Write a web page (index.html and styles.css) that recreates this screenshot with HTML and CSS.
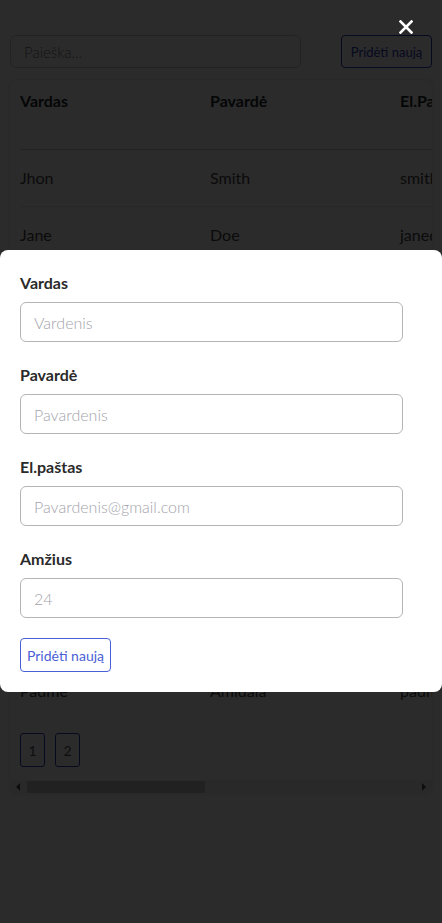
FILE: index.html
```html
<!DOCTYPE html>
<html lang="lt">
<head>
<meta charset="utf-8">
<title>Vartotojai</title>
<link rel="stylesheet" href="styles.css">
</head>
<body>
<div class="page">
  <div class="toolbar">
    <input class="search" type="text" placeholder="Paieška...">
    <button class="btn btn-outline">Pridėti naują</button>
  </div>
  <div class="card">
    <div class="table-wrap">
      <table class="users">
        <thead>
          <tr><th>Vardas</th><th>Pavardė</th><th>El.Paštas</th><th>Amžius</th></tr>
        </thead>
        <tbody>
          <tr><td>Jhon</td><td>Smith</td><td>smith@gmail.com</td><td>30</td></tr>
          <tr><td>Jane</td><td>Doe</td><td>janedoe@gmail.com</td><td>25</td></tr>
          <tr><td>Luke</td><td>Skywalker</td><td>luke@gmail.com</td><td>22</td></tr>
          <tr><td>Leia</td><td>Organa</td><td>leia@gmail.com</td><td>22</td></tr>
          <tr><td>Han</td><td>Solo</td><td>han@gmail.com</td><td>35</td></tr>
          <tr><td>Obi-Wan</td><td>Kenobi</td><td>obiwan@gmail.com</td><td>57</td></tr>
          <tr><td>Anakin</td><td>Skywalker</td><td>anakin@gmail.com</td><td>41</td></tr>
          <tr><td>Mace</td><td>Windu</td><td>mace@gmail.com</td><td>53</td></tr>
          <tr><td>Yoda</td><td>Master</td><td>yoda@gmail.com</td><td>900</td></tr>
          <tr><td>Padme</td><td>Amidala</td><td>padme@gmail.com</td><td>27</td></tr>
        </tbody>
      </table>
      <div class="pagination">
        <button class="page-btn">1</button>
        <button class="page-btn">2</button>
      </div>
    </div>
    <div class="scrollbar">
      <span class="arrow arrow-left"></span>
      <span class="track"><span class="thumb"></span></span>
      <span class="arrow arrow-right"></span>
    </div>
  </div>
</div>

<div class="overlay"></div>
<button class="close" aria-label="Uždaryti">
  <svg width="14" height="14" viewBox="0 0 14 14"><path d="M1.5 1.5L12.5 12.5M12.5 1.5L1.5 12.5" stroke="#fff" stroke-width="2.6" stroke-linecap="square"/></svg>
</button>
<div class="modal">
  <form class="form">
    <div class="field">
      <span class="label">Vardas</span>
      <input class="input" type="text" placeholder="Vardenis">
    </div>
    <div class="field">
      <span class="label">Pavardė</span>
      <input class="input" type="text" placeholder="Pavardenis">
    </div>
    <div class="field">
      <span class="label">El.paštas</span>
      <input class="input" type="text" placeholder="Pavardenis@gmail.com">
    </div>
    <div class="field">
      <span class="label">Amžius</span>
      <input class="input" type="text" placeholder="24">
    </div>
    <div class="actions">
      <button type="button" class="btn btn-primary">Pridėti naują</button>
    </div>
  </form>
</div>
</body>
</html>
```

FILE: styles.css
```css
* { box-sizing: border-box; }
html, body { margin: 0; padding: 0; }
body {
  background: #fff;
  font-family: Lato, "Open Sans", sans-serif;
  color: #212529;
  width: 442px;
  height: 923px;
  overflow: hidden;
}
.page { padding: 35px 10px 0; }
.toolbar {
  display: flex;
  justify-content: space-between;
  align-items: center;
  height: 33px;
}
.search {
  width: 291px;
  height: 33px;
  border: 1px solid #ccc;
  border-radius: 6px;
  padding: 0 13px;
  font: 300 15px Lato, sans-serif;
}
.btn {
  font-family: Lato, sans-serif;
  background: #fff;
  cursor: pointer;
}
.btn-outline {
  width: 91px;
  height: 33px;
  border: 1px solid #2d3bb8;
  border-radius: 4px;
  color: #2d3bb8;
  font-size: 13px;
  padding: 0;
}
.card {
  margin-top: 12px;
  border-radius: 8px;
  box-shadow: 0 0 4px rgba(0,0,0,.15);
  overflow: hidden;
}
.table-wrap { overflow: hidden; padding: 0 10px; }
.users {
  border-collapse: collapse;
  width: 760px;
  table-layout: fixed;
  font-size: 16px;
}
.users th, .users td {
  width: 190px;
  text-align: left;
  padding: 0;
  white-space: nowrap;
}
.users th {
  height: 69px;
  padding-bottom: 27px;
  font-weight: 700;
  border-bottom: 1px solid #cfcfcf;
}
.users td {
  height: 57px;
  padding-bottom: 1px;
  font-weight: 400;
  color: #444;
  border-bottom: 1px solid #e4e4e4;
}
.users tbody tr:last-child td { border-bottom: none; }
.pagination {
  display: flex;
  gap: 10px;
  padding: 14px 0 13px;
}
.page-btn {
  width: 25px;
  height: 34px;
  border: 1px solid #2d3bb8;
  border-radius: 3px;
  background: #fff;
  color: #555;
  font: 400 14px Lato, sans-serif;
  padding: 0;
}
.scrollbar {
  display: flex;
  align-items: center;
  height: 14px;
  background: #f1f1f1;
}
.arrow { width: 16px; height: 14px; display: flex; align-items: center; justify-content: center; }
.arrow-left::before {
  content: "";
  border-top: 4px solid transparent;
  border-bottom: 4px solid transparent;
  border-right: 4px solid #505050;
}
.arrow-right::before {
  content: "";
  border-top: 4px solid transparent;
  border-bottom: 4px solid transparent;
  border-left: 4px solid #505050;
}
.track { flex: 1; height: 12px; }
.thumb { display: block; width: 178px; height: 12px; margin-left: 1px; background: #c1c1c1; }

.overlay {
  position: fixed;
  inset: 0;
  background: rgba(0,0,0,.83);
}
.close {
  position: fixed;
  top: 20px;
  left: 399px;
  width: 14px;
  height: 14px;
  padding: 0;
  border: 0;
  background: none;
  display: flex;
}
.modal {
  position: fixed;
  top: 250px;
  left: 0;
  width: 442px;
  height: 442px;
  background: #fff;
  border-radius: 8px;
  padding: 21px 20px 20px;
}
.form { display: flex; flex-direction: column; gap: 21px; margin: 0; }
.field { display: flex; flex-direction: column; gap: 7px; }
.label {
  font-weight: 700;
  font-size: 16px;
  line-height: 24px;
  color: #2a2a2a;
}
.input {
  width: 383px;
  height: 40px;
  border: 1px solid #b5b5b5;
  border-radius: 6px;
  padding: 0 13px;
  font: 300 16px Lato, sans-serif;
  color: #333;
}
.input::placeholder { color: #a3a3ab; }
.actions { margin-top: -1px; }
.btn-primary {
  width: 91px;
  height: 34px;
  border: 1px solid #4a5fd6;
  border-radius: 4px;
  color: #4a5fd6;
  font-size: 14px;
  padding: 0;
}
```
